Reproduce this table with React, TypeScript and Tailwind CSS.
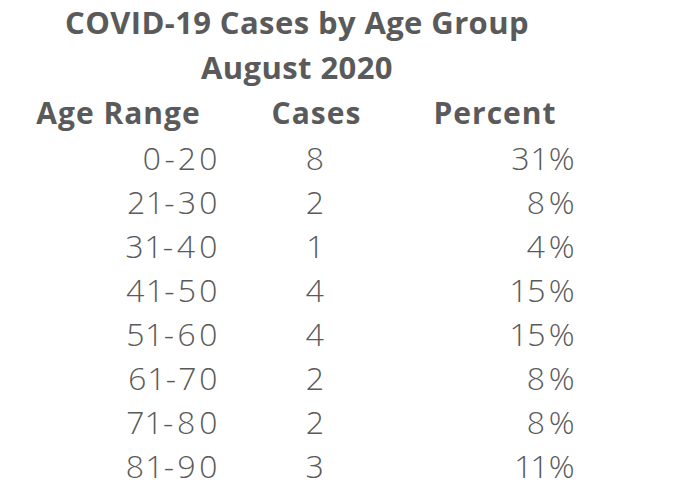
const rows = [
  ['0-20', '8', '31%'],
  ['21-30', '2', '8%'],
  ['31-40', '1', '4%'],
  ['41-50', '4', '15%'],
  ['51-60', '4', '15%'],
  ['61-70', '2', '8%'],
  ['71-80', '2', '8%'],
  ['81-90', '3', '11%'],
]

const App = () => {
  return (
    <div className="h-[500px] w-[688px] bg-white pl-[20px] text-[#5a5a5a] font-['Open_Sans',sans-serif]">
      <div className="w-[554px]">
        <h1 className="text-center text-[31px] font-bold leading-[45px] tracking-[0.4px]">COVID-19 Cases by Age Group</h1>
        <h2 className="text-center text-[31px] font-bold leading-[45px] tracking-[0.4px]">August 2020</h2>
        <div className="grid grid-cols-[197px_199px_158px] text-[30px] font-bold leading-[45px] tracking-[1px]">
          <div className="text-center">Age Range</div>
          <div className="text-center">Cases</div>
          <div className="text-center">Percent</div>
        </div>
        <div className="mt-[1px]">
          {rows.map(([age, cases, pct]) => (
            <div key={age} className="grid grid-cols-[197px_199px_158px] text-[32px] font-light leading-[44px] tracking-[3.5px] proportional-nums">
              <div className="text-right -mr-[4px]">{age}</div>
              <div className="text-center">{cases}</div>
              <div className="text-right -mr-[4px]">{pct}</div>
            </div>
          ))}
        </div>
      </div>
    </div>
  )
}

export default App
